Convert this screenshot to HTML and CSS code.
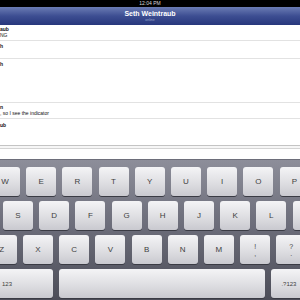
FILE: index.html
```html
<!DOCTYPE html>
<html lang="en">
<head>
    <meta charset="UTF-8">
    <meta name="viewport" content="width=device-width, initial-scale=1.0">
    <title>Seth Weintraub</title>
    <link rel="stylesheet" href="styles.css">
</head>
<body>

<div class="status-bar">12:04 PM</div>

<div class="nav-bar">
    <div class="nav-title">Seth Weintraub</div>
    <div class="nav-sub">online</div>
</div>

<!-- Conversation -->
<div class="thread">
    <div class="msg msg-1">
        <div class="name">aub</div>
        <div class="text">NG</div>
    </div>
    <div class="msg msg-2">
        <div class="name">h</div>
    </div>
    <div class="msg msg-3">
        <div class="name">h</div>
    </div>
    <div class="msg msg-4">
        <div class="name">n</div>
        <div class="text">, so I see the indicator</div>
    </div>
    <div class="msg msg-5">
        <div class="name">ub</div>
    </div>
</div>

<div class="compose">
    <div class="compose-field"></div>
</div>

<!-- Keyboard -->
<div class="keyboard">
    <div class="key-row row-1">
        <div class="key">W</div>
        <div class="key">E</div>
        <div class="key">R</div>
        <div class="key">T</div>
        <div class="key">Y</div>
        <div class="key">U</div>
        <div class="key">I</div>
        <div class="key">O</div>
        <div class="key">P</div>
    </div>
    <div class="key-row row-2">
        <div class="key">S</div>
        <div class="key">D</div>
        <div class="key">F</div>
        <div class="key">G</div>
        <div class="key">H</div>
        <div class="key">J</div>
        <div class="key">K</div>
        <div class="key">L</div>
        <div class="key key-wide"></div>
    </div>
    <div class="key-row row-3">
        <div class="key">Z</div>
        <div class="key">X</div>
        <div class="key">C</div>
        <div class="key">V</div>
        <div class="key">B</div>
        <div class="key">N</div>
        <div class="key">M</div>
        <div class="key key-punct"><span>!</span><span>,</span></div>
        <div class="key key-punct"><span>?</span><span>.</span></div>
    </div>
    <div class="key-row row-4">
        <div class="key key-mode key-left">123</div>
        <div class="key key-space"></div>
        <div class="key key-mode key-right">.?123</div>
    </div>
</div>

</body>
</html>
```

FILE: styles.css
```css
body {
    font-family: 'Liberation Sans', Arial, sans-serif;
    background-color: #fff;
    margin: 0;
    padding: 0;
    width: 300px;
    height: 300px;
    overflow: hidden;
}
.status-bar {
    height: 7px;
    background-color: #000;
    color: #d8d8d8;
    font-size: 5px;
    line-height: 7px;
    text-align: center;
}
.nav-bar {
    height: 18px;
    box-sizing: border-box;
    padding-top: 3px;
    background: linear-gradient(#6b7cb4, #3d4e92 50%, #27377c);
    text-align: center;
}
.nav-title {
    color: #fff;
    font-size: 7px;
    font-weight: bold;
    line-height: 8px;
}
.nav-sub {
    color: #9aa5cc;
    font-size: 3.5px;
    line-height: 4px;
}
.thread {
    background-color: #fff;
}
.msg {
    border-bottom: 1px solid #e2e2e2;
    box-sizing: border-box;
    font-size: 5px;
    color: #111;
}
.msg-1 { height: 16px; padding-top: 1px; }
.msg-2 { height: 18px; padding-top: 2px; }
.msg-3 { height: 44px; padding-top: 2px; }
.msg-4 { height: 16px; padding-top: 1px; }
.msg-5 { height: 26px; padding-top: 3px; border-bottom: none; }
.name {
    font-weight: bold;
    line-height: 6px;
}
.text {
    line-height: 7px;
}
.compose {
    height: 14px;
    box-sizing: border-box;
    border-top: 1px solid #c4c4c4;
    padding-top: 2px;
    background-color: #f6f6f6;
}
.compose-field {
    height: 100%;
    border-top: 1px solid #d4d4d4;
    background-color: #fff;
}
.keyboard {
    height: 141px;
    box-sizing: border-box;
    padding-top: 7px;
    background: linear-gradient(#8d8e9a, #70717e 40%, #4c4d58);
    border-top: 1px solid #6d6e7a;
    display: flex;
    flex-direction: column;
    gap: 5px;
}
.key-row {
    display: flex;
    gap: 6.2px;
}
.row-1 { margin-left: -10px; }
.row-2 { margin-left: 3px; }
.row-3 { margin-left: -13.2px; }
.row-4 { margin-left: -56px; }
.key {
    flex: none;
    width: 30px;
    height: 29px;
    border-radius: 3px;
    background: linear-gradient(#f4f4f6, #dcdce0 60%, #c9c9cf);
    box-shadow: 0 1px 0 #3a3b44;
    color: #404040;
    font-size: 8px;
    display: flex;
    align-items: center;
    justify-content: center;
}
.key-wide {
    width: 60px;
}
.key-punct {
    flex-direction: column;
    font-size: 7px;
    line-height: 7px;
}
.key-mode {
    font-size: 6px;
}
.key-left {
    width: 109px;
    justify-content: flex-end;
    padding-right: 41px;
    box-sizing: border-box;
}
.key-space {
    width: 206px;
}
.key-right {
    width: 60px;
    justify-content: flex-start;
    padding-left: 10px;
    box-sizing: border-box;
}
```
